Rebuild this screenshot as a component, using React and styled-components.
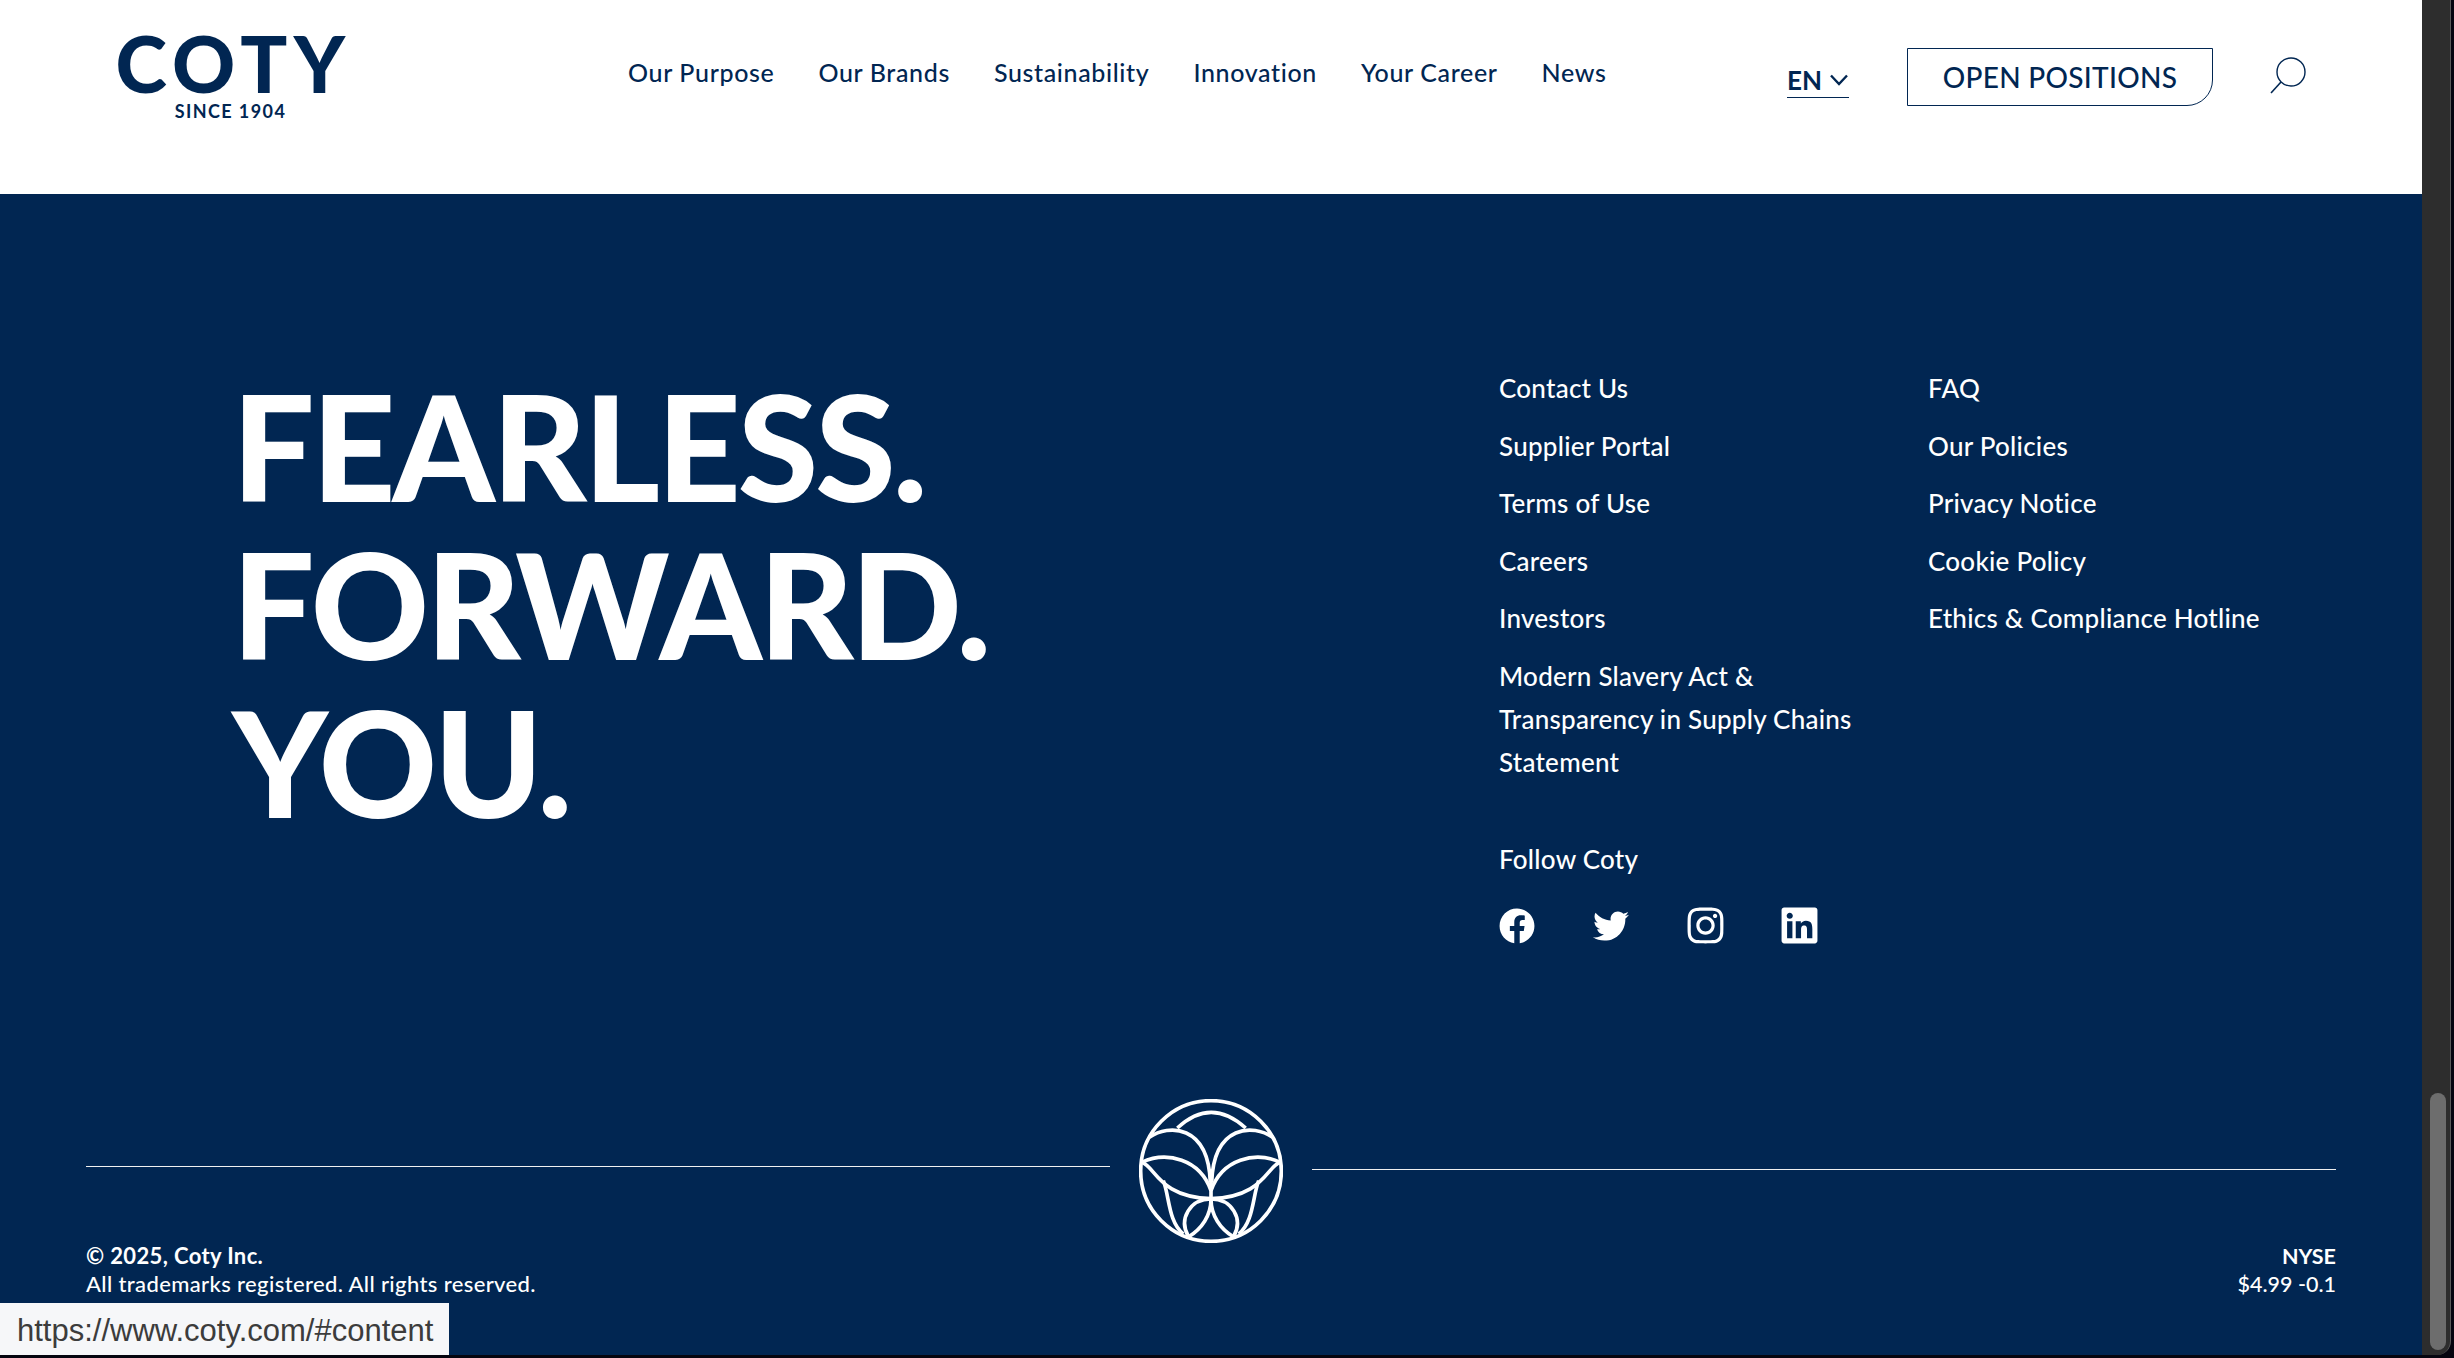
import React from 'react';
import styled, { createGlobalStyle } from 'styled-components';
import { FaFacebook, FaTwitter, FaInstagram, FaLinkedin } from 'react-icons/fa';

const NAVY = '#012652';
const FONT = `Lato, 'Liberation Sans', sans-serif`;

const GlobalStyle = createGlobalStyle`
    html, body { margin: 0; padding: 0; background: #05050f; }
    * { box-sizing: border-box; }
    a { color: inherit; text-decoration: none; }
`;

const Frame = styled.div`
    position: relative;
    display: flex;
    width: 2454px;
    height: 1358px;
    overflow: hidden;
    font-family: ${FONT};
    background: #05050f;
`;

const Page = styled.div`
    display: flex;
    flex-direction: column;
    width: 2422px;
    height: 1355px;
`;

const Header = styled.header`
    display: flex;
    align-items: flex-start;
    height: 194px;
    padding: 0 116px 0 115px;
    background: #fff;
    color: ${NAVY};
`;

const Logo = styled.div`
    width: 231px;
    margin-top: 20px;
    text-align: center;
`;

const LogoWord = styled.div`
    margin-right: -6px;
    font-size: 78px;
    line-height: 86px;
    font-weight: 900;
    letter-spacing: 6.5px;
    white-space: nowrap;
`;

const LogoSince = styled.div`
    font-size: 18px;
    line-height: 20px;
    font-weight: 700;
    letter-spacing: 1.4px;
    margin-top: -5px;
`;

const Nav = styled.nav`
    display: flex;
    gap: 44px;
    margin-left: 282px;
    margin-top: 56px;
    font-size: 25px;
    line-height: 32px;
    font-weight: 500;
    letter-spacing: 0.64px;
    white-space: nowrap;
`;

const Lang = styled.div`
    display: flex;
    align-items: center;
    gap: 8px;
    height: 36px;
    width: 62px;
    margin-left: auto;
    margin-top: 62px;
    font-size: 26px;
    font-weight: 700;
    border-bottom: 1px solid ${NAVY};
`;

const OpenPositions = styled.a`
    display: flex;
    align-items: center;
    justify-content: center;
    width: 306px;
    height: 58px;
    margin-left: 58px;
    margin-top: 48px;
    font-size: 28px;
    font-weight: 500;
    letter-spacing: 0.3px;
    border: 1px solid ${NAVY};
    border-bottom-right-radius: 26px;
    white-space: nowrap;
`;

const SearchButton = styled.div`
    display: flex;
    width: 37px;
    height: 38px;
    margin-left: 56px;
    margin-top: 57px;
`;

const Footer = styled.footer`
    display: flex;
    flex-direction: column;
    flex: 1;
    background: ${NAVY};
    color: #fff;
`;

const Columns = styled.div`
    display: grid;
    grid-template-columns: 1264px 429px 1fr;
    height: 900px;
    padding-left: 235px;
`;

const Headline = styled.h1`
    margin: 173px 0 0 -3px;
    font-size: 146px;
    line-height: 158px;
    font-weight: 900;
    letter-spacing: -3px;
    white-space: nowrap;
`;

const LinkColumn = styled.div`
    display: flex;
    flex-direction: column;
    padding-top: 173px;
`;

const FooterLink = styled.a`
    display: block;
    max-width: 380px;
    margin-bottom: 14.6px;
    font-size: 26px;
    line-height: 43px;
    font-weight: 500;
    letter-spacing: 0.25px;
`;

const Follow = styled.div`
    margin-top: 39px;
    font-size: 26px;
    line-height: 43px;
    font-weight: 500;
    letter-spacing: 0.25px;
`;

const Socials = styled.div`
    display: grid;
    grid-template-columns: repeat(4, 94px);
    margin-top: 27px;
`;

const Social = styled.div`
    display: flex;
    align-items: center;
    justify-content: center;
    width: 36px;
    height: 36px;
    font-size: ${(p) => (p.$tall ? '41px' : '36px')};

    svg { display: block; flex: none; }
`;

const DividerRow = styled.div`
    display: flex;
    align-items: center;
    justify-content: space-between;
    height: 146px;
    margin-top: 4px;
    padding: 0 86px;
`;

const Rule = styled.div`
    width: 1024px;
    height: 1px;
    background: #f0f0f0;
    margin-top: ${(p) => (p.$high ? '-9px' : '-3px')};
`;

const Bottom = styled.div`
    display: flex;
    justify-content: space-between;
    margin-top: -2px;
    padding: 0 86px;
    line-height: 28px;
    font-weight: 500;
`;

const Legal = styled.div`
    font-size: 22px;
    letter-spacing: 0.37px;
`;

const Ticker = styled.div`
    font-size: 21.5px;
    text-align: right;
`;

const Strong = styled.div`
    font-weight: 700;
`;

const StatusBubble = styled.div`
    position: absolute;
    left: 0;
    bottom: 3px;
    display: flex;
    align-items: center;
    width: 449px;
    height: 52px;
    padding: 3px 0 0 17px;
    background: #f6f7f9;
    color: #3c3c3c;
    font-family: 'Liberation Sans', sans-serif;
    font-size: 31px;
    white-space: nowrap;
`;

const ScrollTrack = styled.div`
    width: 29px;
    height: 1355px;
    padding: 1093px 5px 5px 8px;
    background: #2d2d2d;
    border-right: 1px solid #5a5a5a;
    border-bottom-right-radius: 14px;
`;

const ScrollThumb = styled.div`
    width: 16px;
    height: 257px;
    border-radius: 8px;
    background: #6d6d6d;
`;

const SearchIcon = () => (
    <svg width="37" height="38" viewBox="0 0 37 38" fill="none" stroke={NAVY} strokeWidth="1.4">
        <ellipse cx="22" cy="15" rx="14" ry="14" />
        <path d="M12 25 L2 36" strokeWidth="1.6" />
    </svg>
);

const Chevron = () => (
    <svg width="18" height="12" viewBox="0 0 18 12" fill="none" stroke={NAVY} strokeWidth="2.4">
        <path d="M1 1.5 L9 10 L17 1.5" />
    </svg>
);

const Emblem = () => (
    <svg width="144" height="144" viewBox="117 50 432 432" fill="none" stroke="#fff" strokeWidth="11">
        <circle cx="333" cy="266" r="211" />
        <path d="M232 137 Q333 43 437 137" />
        <path d="M148 165 C205 125 325 125 331 300" />
        <path d="M518 165 C461 125 341 125 335 300" />
        <path d="M125 240 C200 205 300 230 333 325" />
        <path d="M541 240 C466 205 366 230 333 325" />
        <path d="M125 240 C165 250 175 345 333 349 C491 345 501 250 541 240" />
        <path d="M190 295 C208 340 205 420 250 455" />
        <path d="M476 295 C458 340 461 420 416 455" />
        <path d="M333 350 C270 350 235 410 265 462" />
        <path d="M333 350 C396 350 431 410 401 462" />
        <path d="M333 350 C333 400 305 440 265 464" />
        <path d="M333 350 C333 400 361 440 401 464" />
        <path d="M333 260 L333 350" />
    </svg>
);

const columnOne = ['Contact Us', 'Supplier Portal', 'Terms of Use', 'Careers', 'Investors', 'Modern Slavery Act & Transparency in Supply Chains Statement'];
const columnTwo = ['FAQ', 'Our Policies', 'Privacy Notice', 'Cookie Policy', 'Ethics & Compliance Hotline'];
const navItems = ['Our Purpose', 'Our Brands', 'Sustainability', 'Innovation', 'Your Career', 'News'];

const App = () => (
    <Frame>
        <GlobalStyle />
        <Page>
            <Header>
                <Logo>
                    <LogoWord>COTY</LogoWord>
                    <LogoSince>SINCE 1904</LogoSince>
                </Logo>
                <Nav>
                    {navItems.map((item) => <a key={item} href="#">{item}</a>)}
                </Nav>
                <Lang>EN <Chevron /></Lang>
                <OpenPositions href="#">OPEN POSITIONS</OpenPositions>
                <SearchButton><SearchIcon /></SearchButton>
            </Header>
            <Footer>
                <Columns>
                    <Headline>FEARLESS.<br />FORWARD.<br />YOU.</Headline>
                    <LinkColumn>
                        {columnOne.map((item) => <FooterLink key={item} href="#">{item}</FooterLink>)}
                        <Follow>Follow Coty</Follow>
                        <Socials>
                            <Social><FaFacebook /></Social>
                            <Social><FaTwitter /></Social>
                            <Social $tall><FaInstagram /></Social>
                            <Social $tall><FaLinkedin /></Social>
                        </Socials>
                    </LinkColumn>
                    <LinkColumn>
                        {columnTwo.map((item) => <FooterLink key={item} href="#">{item}</FooterLink>)}
                    </LinkColumn>
                </Columns>
                <DividerRow>
                    <Rule $high />
                    <Emblem />
                    <Rule />
                </DividerRow>
                <Bottom>
                    <Legal>
                        <Strong>© 2025, Coty Inc.</Strong>
                        <div>All trademarks registered. All rights reserved.</div>
                    </Legal>
                    <Ticker>
                        <Strong>NYSE</Strong>
                        <div>$4.99 -0.1</div>
                    </Ticker>
                </Bottom>
            </Footer>
        </Page>
        <ScrollTrack><ScrollThumb /></ScrollTrack>
        <StatusBubble>https://www.coty.com/#content</StatusBubble>
    </Frame>
);

export default App;
